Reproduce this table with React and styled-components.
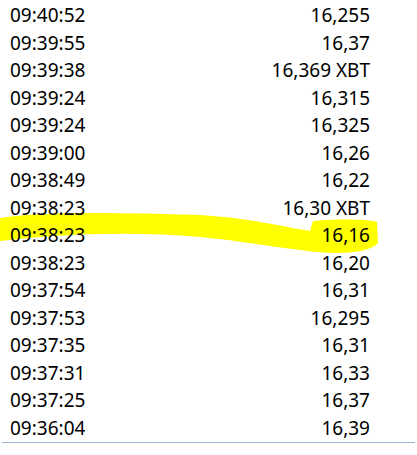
import React from "react";
import styled, { createGlobalStyle } from "styled-components";

const Global = createGlobalStyle`
  html, body { margin: 0; padding: 0; background: #ffffff; }
  body { font-family: "Noto Sans", "Open Sans", sans-serif; }
`;

const Page = styled.div`
  position: relative;
  width: 417px;
  height: 455px;
  background: #ffffff;
  overflow: hidden;
`;

const Table = styled.div`
  position: relative;
  z-index: 1;
  display: flex;
  flex-direction: column;
  padding-top: 2px;
  margin-left: 2px;
  width: 413px;
  border-bottom: 1px solid #9fb3d3;
`;

const Row = styled.div`
  display: grid;
  grid-template-columns: 1fr auto;
  height: 27.5px;
  line-height: 27.5px;
  padding: 0 45px 0 8px;
  font-size: 19px;
  color: #000000;
`;

const Time = styled.span`
  text-align: left;
`;

const Price = styled.span`
  text-align: right;
`;

const Highlight = styled.svg`
  position: absolute;
  left: 0;
  top: 0;
  z-index: 0;
  pointer-events: none;
`;

const rows = [
  ["09:40:52", "16,255"],
  ["09:39:55", "16,37"],
  ["09:39:38", "16,369 XBT"],
  ["09:39:24", "16,315"],
  ["09:39:24", "16,325"],
  ["09:39:00", "16,26"],
  ["09:38:49", "16,22"],
  ["09:38:23", "16,30 XBT"],
  ["09:38:23", "16,16"],
  ["09:38:23", "16,20"],
  ["09:37:54", "16,31"],
  ["09:37:53", "16,295"],
  ["09:37:35", "16,31"],
  ["09:37:31", "16,33"],
  ["09:37:25", "16,37"],
  ["09:36:04", "16,39"],
];

export default function App() {
  return (
    <Page>
      <Global />
      <Highlight width="417" height="455" viewBox="0 0 417 455">
        <path
          fill="#ffff00"
          d="M0,218 C40,212 100,212 200,215 C250,218 290,228 310,231 L313,221 C340,219 365,219 377,222 L378,243 C372,250 355,253 335,253 C300,252 260,243 200,237 C130,231 60,234 0,241 Z"
        />
      </Highlight>
      <Table>
        {rows.map(([t, p], i) => (
          <Row key={i}>
            <Time>{t}</Time>
            <Price>{p}</Price>
          </Row>
        ))}
      </Table>
    </Page>
  );
}
